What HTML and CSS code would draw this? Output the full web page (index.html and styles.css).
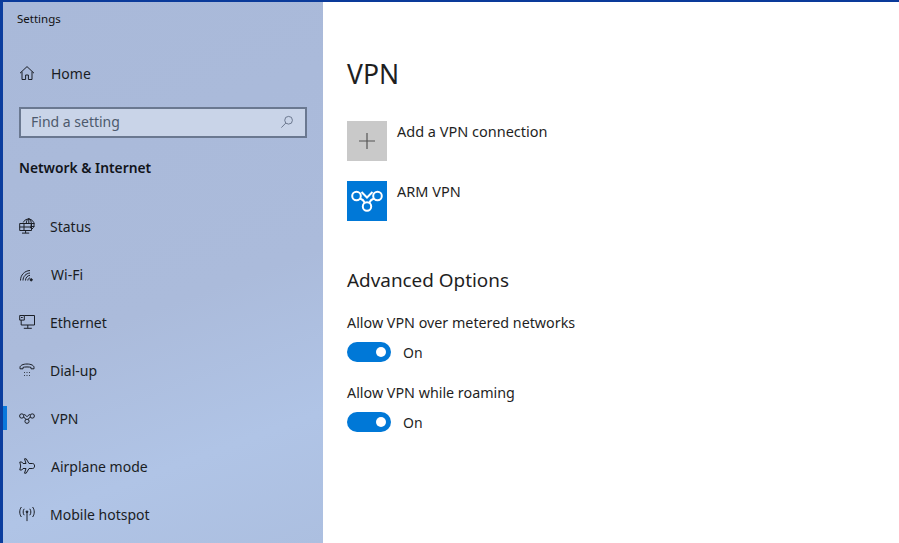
FILE: index.html
```html
<!DOCTYPE html>
<html lang="en">
<head>
<meta charset="utf-8">
<title>Settings</title>
<link rel="stylesheet" href="styles.css">
</head>
<body>
<div class="window">
  <aside class="sidebar">
    <div class="app-title">Settings</div>
    <a class="nav-item home">
      <svg class="icon" viewBox="0 0 16 16"><path d="M1 8.200 8 1.600l7 6.600M3 6.600V14.500h3.600V10h2.800v4.500H13V6.600"/></svg>
      <span>Home</span>
    </a>
    <div class="search">
      <span class="search-text">Find a setting</span>
      <svg class="search-icon" viewBox="0 0 16 16"><circle cx="9.800" cy="6" r="4.400"/><path d="M6.600 9.200 1.600 14.400"/></svg>
    </div>
    <div class="section-title">Network &amp; Internet</div>
    <nav class="nav">
      <a class="nav-item">
        <svg class="icon" viewBox="0 0 16 16"><path d="M4.200 4.500A5.700 5.700 0 1 1 12.500 11.500M9.800.5C8 1.800 7.300 3.200 7.300 5.500M9.800.5c1.800 1.300 2.500 3 2.500 5s-.4 3.500-1 4.800M9.800.5v5M12.500 8.500h3M12.500 5.500h3"/><path d="M.7 5.500h11.800v7H.7zM.7 9h11.800M5 5.500v7M6.600 12.500v2.600M3 15.100h7.200"/></svg>
        <span>Status</span>
      </a>
      <a class="nav-item wifi">
        <svg class="icon" viewBox="0 0 16 16"><path d="M1.500 14.500C1.500 9 5.500 4.800 11 4.500M4 14.500C4 10.500 7 7.300 11 7M6.500 14.500c0-2.800 2-5 4.500-5.200M8.800 14.500c0-1.200.8-2.300 2.200-2.600"/><circle class="dot" cx="12.200" cy="13.800" r="1.100"/></svg>
        <span>Wi-Fi</span>
      </a>
      <a class="nav-item">
        <svg class="icon" viewBox="0 0 16 16"><path d="M5.300 1.500h10.200v9.500H2.200V6.100M.7 1.500h4.600v4.600H.7zM8.800 11v3.200M4.800 14.300h8"/><path d="M2 3.500h1.700"/></svg>
        <span>Ethernet</span>
      </a>
      <a class="nav-item">
        <svg class="icon" viewBox="0 0 16 16"><path d="M1 6.800V5.300C1 3.500 4 2 8 2s7 1.500 7 3.300v1.500h-3V5.400c-1-.6-7-.6-8 0v1.400z"/><path class="dots" d="M5 10.500h1M7.500 10.500h1M10 10.500h1M5 13.500h1M7.500 13.500h1M10 13.500h1"/></svg>
        <span>Dial-up</span>
      </a>
      <a class="nav-item active">
        <span class="active-bar"></span>
        <svg class="icon icon-vpn" viewBox="4 3 32 32"><circle cx="9.500" cy="15" r="4.300"/><circle cx="30.500" cy="15" r="4.300"/><circle cx="20" cy="25.500" r="4.200"/><path d="M14.500 11 20 16.500 25.500 11M13 17.500c2.500.8 4 2.400 4.800 4.400M27 17.500c-2.500.8-4 2.400-4.800 4.400"/></svg>
        <span>VPN</span>
      </a>
      <a class="nav-item airplane">
        <svg class="icon" viewBox="0 0 16 16"><path d="M5.500.8h1.700L10 5.500h3.700c1 0 1.900 1.100 1.900 2.500s-.9 2.500-1.900 2.500H10l-2.800 4.700H5.500L7 10.500H4L2.800 12H.8l.9-4-.9-4h2L4 5.500h3z"/></svg>
        <span>Airplane mode</span>
      </a>
      <a class="nav-item">
        <svg class="icon" viewBox="0 0 16 16"><circle class="dot" cx="8" cy="5.800" r=".9"/><path d="M8 6.500v8.600M5.200 2.800C3.800 4.600 3.800 7.400 5.200 9.200M10.800 2.800c1.400 1.800 1.400 4.600 0 6.400M2.400 1C.2 3.800.2 8.200 2.400 11M13.600 1c2.200 2.800 2.200 7.200 0 10"/></svg>
        <span>Mobile hotspot</span>
      </a>
    </nav>
  </aside>
  <main class="content">
    <h1 class="page-title">VPN</h1>
    <div class="vpn-row">
      <div class="tile tile-add">
        <svg class="tile-plus" viewBox="0 0 16 16"><path d="M8 0v16M0 8h16"/></svg>
      </div>
      <span class="vpn-label">Add a VPN connection</span>
    </div>
    <div class="vpn-row">
      <div class="tile tile-vpn">
        <svg class="tile-logo" viewBox="0 0 40 40"><circle cx="9.500" cy="15" r="4.300"/><circle cx="30.500" cy="15" r="4.300"/><circle cx="20" cy="25.500" r="4.200"/><path d="M14.500 11 20 16.500 25.500 11M13 17.500c2.500.8 4 2.400 4.800 4.400M27 17.500c-2.500.8-4 2.400-4.800 4.400"/></svg>
      </div>
      <span class="vpn-label">ARM VPN</span>
    </div>
    <h2 class="section-heading">Advanced Options</h2>
    <div class="setting">
      <div class="setting-label">Allow VPN over metered networks</div>
      <div class="toggle-row"><span class="toggle"><span class="knob"></span></span><span>On</span></div>
    </div>
    <div class="setting">
      <div class="setting-label">Allow VPN while roaming</div>
      <div class="toggle-row"><span class="toggle"><span class="knob"></span></span><span>On</span></div>
    </div>
  </main>
</div>
</body>
</html>
```
FILE: styles.css
```css
* { box-sizing: border-box; }
html, body { margin: 0; height: 100%; overflow: hidden; }
body {
  font-family: "Noto Sans", "Open Sans", sans-serif;
  font-size: 14px;
  color: #1f1f1f;
  background: #fff;
}
.window {
  display: flex;
  height: 543px;
  border-top: 2px solid #0a3a9a;
}
.sidebar {
  width: 323px;
  flex: none;
  border-left: 3px solid #0b3d9e;
  background: linear-gradient(160deg, #a9b9d9 0%, #abbbdb 55%, #b0c4e6 80%, #acbfe0 100%);
  padding-top: 9px;
  color: #1a1d24;
}
.app-title {
  font-size: 11.500px;
  line-height: 16px;
  padding-left: 14px;
  color: #111;
}
.nav-item {
  position: relative;
  display: flex;
  align-items: center;
  height: 48px;
  padding-left: 16px;
  gap: 15px;
}
.nav-item.home {
  margin-top: 22px;
  gap: 16px;
}
.wifi, .active, .airplane { gap: 16px; }
.icon {
  width: 16px;
  height: 16px;
  flex: none;
  fill: none;
  stroke: #1b1f27;
  stroke-width: 1;
}
.icon .dot { fill: #1b1f27; }
.icon .dots { opacity: .8; }
.icon-vpn { stroke-width: 2; }
.search {
  display: flex;
  align-items: center;
  justify-content: space-between;
  width: 288px;
  height: 31px;
  margin: 10px 0 0 16px;
  padding: 0 11px 2px 10px;
  border: 2px solid #6a7890;
  background: #c9d4e8;
}
.search-text { color: #4d5a6d; }
.search-icon {
  width: 14px;
  height: 14px;
  fill: none;
  stroke: #5f6c82;
}
.section-title {
  margin: 20px 0 0 16px;
  font-size: 13.800px;
  line-height: 20px;
  font-weight: 600;
  color: #11141a;
}
.nav { margin-top: 24px; }
.active-bar {
  position: absolute;
  left: 0;
  top: 12px;
  width: 4px;
  height: 24px;
  background: #0a78dc;
}
.content {
  flex: 1;
  padding: 54px 0 0 24px;
}
.page-title {
  margin: 0 0 29px;
  font-size: 26.500px;
  line-height: 36px;
  font-weight: 400;
}
.vpn-row {
  display: flex;
  gap: 10px;
  margin-bottom: 20px;
  align-items: flex-start;
}
.tile {
  display: flex;
  align-items: center;
  justify-content: center;
  width: 40px;
  height: 40px;
  flex: none;
}
.tile-add { background: #c9c9c9; }
.tile-plus {
  width: 16px;
  height: 16px;
  fill: none;
  stroke: #555;
  stroke-width: 1.200;
}
.tile-vpn { background: #0078d7; }
.tile-logo {
  width: 40px;
  height: 40px;
  fill: none;
  stroke: #fff;
  stroke-width: 2;
}
.vpn-label {
  font-size: 14.500px;
  line-height: 20px;
}
.section-heading {
  margin: 46px 0 20px;
  font-size: 18.900px;
  line-height: 26px;
  font-weight: 400;
}
.setting { margin-bottom: 21px; }
.setting-label {
  font-size: 14.300px;
  line-height: 20px;
}
.toggle-row {
  display: flex;
  align-items: center;
  gap: 12px;
  height: 20px;
  margin-top: 9px;
}
.toggle {
  display: flex;
  align-items: center;
  justify-content: flex-end;
  width: 44px;
  height: 20px;
  padding-right: 5px;
  border-radius: 10px;
  background: #0078d7;
}
.knob {
  width: 10px;
  height: 10px;
  border-radius: 50%;
  background: #fff;
}
```
